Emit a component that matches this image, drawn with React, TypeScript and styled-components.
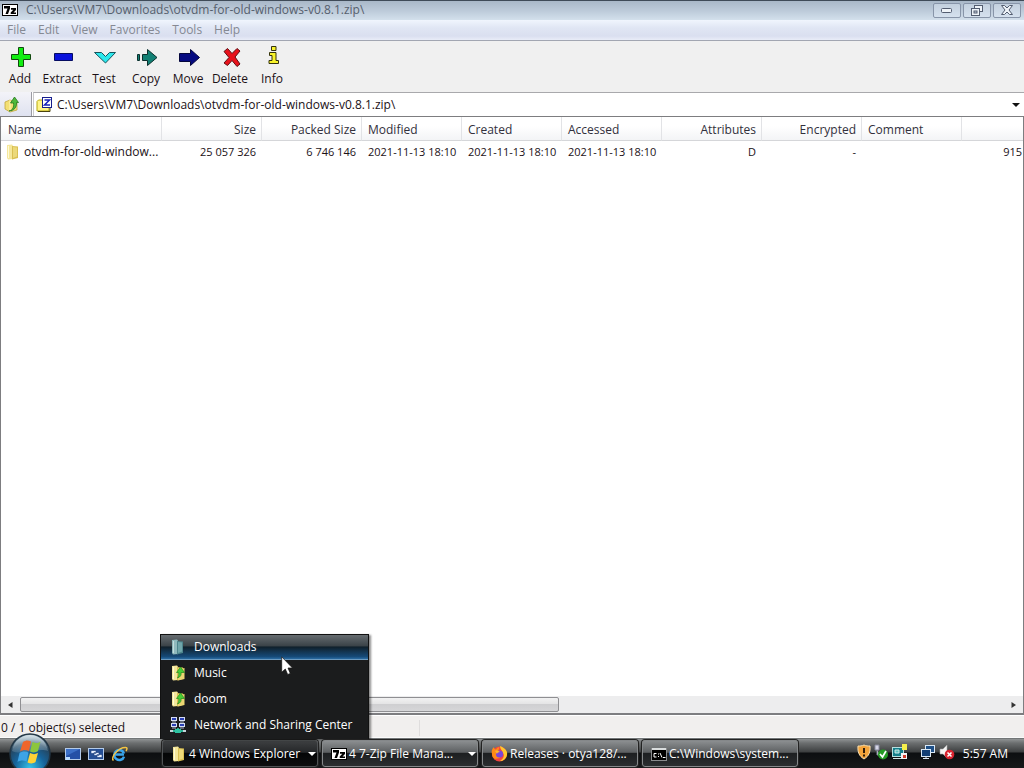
import React from 'react';
import styled, { createGlobalStyle, css } from 'styled-components';

const GlobalStyle = createGlobalStyle`
  *, *::before, *::after { box-sizing: border-box; }
  body {
    margin: 0;
    font-family: "Open Sans", "Noto Sans", sans-serif;
    font-size: 12px;
    line-height: 16px;
    color: #1b1116;
    background: #fff;
  }
  button, input { font: inherit; color: inherit; margin: 0; padding: 0; border: 0; background: none; }
  ul { list-style: none; margin: 0; padding: 0; }
  svg { display: block; flex: none; }
`;

const Desktop = styled.div`
  display: flex;
  flex-direction: column;
  height: 100vh;
  overflow: hidden;
`;

const Window = styled.main`
  flex: 1;
  min-height: 0;
  display: flex;
  flex-direction: column;
  background: #f0f0f0;
`;

const TitleBar = styled.header`
  height: 20px;
  display: flex;
  align-items: center;
  gap: 8px;
  padding: 0 3px 1px 2px;
  border-top: 1px solid #3f4b58;
  background: linear-gradient(#a9b8c8, #bccad9 50%, #d3e0ec);
  color: #56606d;
`;

const Title = styled.h1`
  flex: 1;
  margin: 0;
  font: inherit;
`;

const Caption = styled.div`
  display: flex;
  gap: 2px;
`;

const CaptionButton = styled.button`
  width: 28px;
  height: 15px;
  display: grid;
  place-items: center;
  border: 1px solid #8895a9;
  border-radius: 2px;
  background: linear-gradient(#c3d0de, #d5e1ee);
`;

const MenuBar = styled.nav`
  height: 21px;
  display: flex;
  align-items: center;
  gap: 12px;
  padding: 0 7px;
  color: #858993;
  background: linear-gradient(#f0f5fd, #e0e6f4 40%, #dadff0 80%, #e9edf8);
  border-bottom: 1px solid #a2a6b2;
`;

const Toolbar = styled.div`
  height: 51px;
  display: flex;
  margin-left: -1px;
  background: #f0f0f0;
`;

const Tool = styled.button`
  width: 42px;
  display: flex;
  flex-direction: column;
  align-items: center;
  gap: 2px;
  padding-top: 4px;
  white-space: nowrap;
`;

const AddressBar = styled.div`
  height: 24px;
  display: flex;
  background: #fff;
`;

const UpButton = styled.button`
  width: 32px;
  padding-left: 4px;
  background: linear-gradient(#f3f3f8, #dfe2f0);
  border-right: 1px solid #9c9ca4;
`;

const Combo = styled.label`
  flex: 1;
  display: flex;
  align-items: center;
  gap: 4px;
  padding: 0 4px 0 2px;
  margin-left: 1px;
  border-top: 1px solid #a9a9ac;
  border-left: 1px solid #c9c9cc;
`;

const PathInput = styled.input`
  flex: 1;
  min-width: 0;
  outline: 0;
`;

const ListPane = styled.section`
  flex: 1;
  min-height: 0;
  display: flex;
  flex-direction: column;
  background: #fff;
  border: 1px solid #7d7d80;
  border-bottom-width: 2px;
  overflow: hidden;
`;

const FileTable = styled.table`
  width: 100%;
  table-layout: fixed;
  border-collapse: separate;
  border-spacing: 0;
`;

const Column = styled.col<{ $width?: number }>`
  ${p => p.$width && css`width: ${p.$width}px;`}
`;

const HeadCell = styled.th<{ $right?: boolean }>`
  height: 24px;
  padding: 2px 5px 0 6px;
  font-weight: 400;
  text-align: ${p => (p.$right ? 'right' : 'left')};
  white-space: nowrap;
  color: #32303c;
  background: linear-gradient(#fff 40%, #f3f4f6);
  border-right: 1px solid #e2e3e6;
  border-bottom: 1px solid #d5d6d9;
  &:first-child { padding-left: 7px; }
  &:last-child { border-right: 0; }
`;

const Cell = styled.td<{ $right?: boolean }>`
  height: 21px;
  padding: 0 6px;
  font-size: 11px;
  text-align: ${p => (p.$right ? 'right' : 'left')};
  white-space: nowrap;
  &:last-child { padding-right: 1px; }
`;

const NameCell = styled(Cell)`
  font-size: 12px;
  padding: 0 4px;
`;

const FileName = styled.div`
  display: flex;
  align-items: center;
  gap: 3px;
`;

const Ellipsis = styled.span`
  overflow: hidden;
  text-overflow: ellipsis;
  white-space: nowrap;
`;

const EmptyArea = styled.div`
  flex: 1;
`;

const ScrollBar = styled.div`
  height: 17px;
  display: flex;
  background: #ededee;
`;

const ScrollArrow = styled.button`
  width: 19px;
  display: grid;
  place-items: center;
`;

const Track = styled.div`
  flex: 1;
`;

const Thumb = styled.div`
  width: 539px;
  height: 15px;
  margin-top: 1px;
  border: 1px solid #8f8f92;
  border-radius: 2px;
  background: linear-gradient(#f2f2f2, #e4e4e5 45%, #cfcfd1 50%, #d6d6d8);
`;

const StatusBar = styled.footer`
  height: 23px;
  display: flex;
  align-items: center;
  padding: 2px 0 0 1px;
  background: #f1efee;
  border-top: 1px solid #fff;
  border-bottom: 1px solid #fafafa;
`;

const StatusPart = styled.span<{ $width: number }>`
  width: ${p => p.$width}px;
  border-right: 1px solid #dfdddd;
`;

const Taskbar = styled.footer`
  position: relative;
  height: 30px;
  display: flex;
  align-items: center;
  padding: 1px 16px 0 9px;
  color: #fff;
  background: linear-gradient(#55585a, #909394 1px, #6c6f70 5px, #3c3e3f 14px, #0c0e10 15px, #17191a);
`;

const StartButton = styled.button`
  position: relative;
  width: 42px;
  height: 29px;
`;

const Orb = styled.svg`
  position: absolute;
  left: 0;
  bottom: -7px;
`;

const QuickLaunch = styled.div`
  width: 111px;
  display: flex;
  gap: 7px;
  padding-left: 14px;
`;

const Tasks = styled.div`
  flex: 1;
  min-width: 0;
  display: flex;
  gap: 4px;
`;

const TaskSlot = styled.div`
  position: relative;
  flex: 0 1 156px;
  min-width: 0;
`;

const TaskButton = styled.button<{ $active?: boolean }>`
  width: 100%;
  height: 27px;
  display: flex;
  align-items: center;
  gap: 2px;
  padding: 0 1px 0 8px;
  border: 1px solid #85888a;
  border-radius: 3px;
  color: #fff;
  text-align: left;
  background: linear-gradient(#8b8e90, #5d6062 45%, #1d1f21 50%, #2b2e30);
  box-shadow: 0 0 0 1px #222;
  ${p =>
    p.$active &&
    css`
      border-color: #4f5254;
      background: linear-gradient(#3d3f41, #252729 45%, #050607 50%, #0d0e0f);
    `}
`;

const TaskLabel = styled.span`
  flex: 1;
  white-space: nowrap;
`;

const GroupMenu = styled.ul`
  position: absolute;
  left: -2px;
  bottom: 28px;
  width: 209px;
  padding-bottom: 1px;
  background: #1b1c1d;
  border: 1px solid #111;
  border-bottom: 0;
  box-shadow: 2px 1px 2px rgba(0, 0, 0, 0.45);
`;

const GroupItem = styled.button<{ $hot?: boolean }>`
  width: 100%;
  height: 26px;
  display: flex;
  align-items: center;
  gap: 8px;
  padding: 0 9px;
  color: #fff;
  white-space: nowrap;
  ${p =>
    p.$hot &&
    css`
      height: 25px;
      background: linear-gradient(#666c70, #3b4348 45%, #10202b 50%, #164a78 90%, #2b6ca3);
      border-bottom: 1px solid #6d9bc0;
    `}
`;

const Pointer = styled.svg`
  position: absolute;
  left: 120px;
  top: 21px;
`;

const Tray = styled.div`
  display: flex;
  align-items: center;
  gap: 2px;
`;

const TrayIcons = styled.div`
  display: flex;
  gap: 2px;
  padding-bottom: 4px;
`;

const Clock = styled.time`
  margin-left: 6px;
  white-space: nowrap;
`;

const SevenZip = () => (
  <svg width="16" height="16" viewBox="0 0 16 16">
    <rect x="0" y="2" width="16" height="12" fill="#000" />
    <rect x="1" y="3" width="14" height="10" fill="#fff" />
    <path d="M2 4h6v2.500L6 12H3.500L5.500 6.500H2z" fill="#000" />
    <path d="M9 6h5v2l-2.500 2.500H14V12H8.700v-1.500L11.300 7.700H9z" fill="#000" />
  </svg>
);

const Folder = ({ teal = false, arrow = false }: { teal?: boolean; arrow?: boolean }) => (
  <svg width="16" height="16" viewBox="0 0 16 16">
    <path d="M2 1l5-.5 1 1V15l-5 .5L2 14z" fill={teal ? '#8fb9bd' : '#f5e79b'} />
    <path d="M7 2l6 .5V14l-6 1.500z" fill={teal ? '#4d858d' : '#d9bf52'} />
    <path d="M8 3l4 .5v9L8 14z" fill={teal ? '#70a6ab' : '#ecd979'} />
    <path d="M3.500 2v12" stroke={teal ? '#c4dcdd' : '#fffbd5'} />
    {arrow && (
      <>
        <path d="M8 4l6.500-1v11L8 15.500z" fill="#ecd572" />
        <path d="M7.500 13c3-1 4-3 3.500-5.500H14.500L10.500 2 6.500 7.500h2.200C9 10 8.500 11.500 7.500 13z" fill="#48cf35" stroke="#238a1c" strokeWidth=".7" />
      </>
    )}
  </svg>
);

const UpFolder = () => (
  <svg width="17" height="17" viewBox="0 0 17 17">
    <path d="M1 6l5-2 7 3v7l-7 2-5-3z" fill="#f3df75" stroke="#c2a73c" strokeWidth=".8" />
    <path d="M6 4v12" stroke="#fff6b8" />
    <path d="M5 15c4-1 5-4 4.500-8H6.500l4-6L14.500 6.500h-2C13 11 10 15 5 15z" fill="#4fb93a" stroke="#257a1d" strokeWidth=".8" />
  </svg>
);

const ZipFolder = () => (
  <svg width="17" height="16" viewBox="0 0 17 16">
    <path d="M1 4.500l1.500-1.500h4L8 4.500h5V14H1z" fill="#fff58a" stroke="#b8a90c" />
    <path d="M2 14.500h12V11" fill="none" stroke="#4c4410" />
    <rect x="6.500" y=".5" width="9" height="10" fill="#fff" stroke="#171e8c" />
    <path d="M8.500 3h5L8.500 8h5.500" fill="none" stroke="#1520b8" strokeWidth="1.500" />
  </svg>
);

const Network = () => (
  <svg width="16" height="16" viewBox="0 0 16 16">
    {[[1, 0], [9, 0], [1, 6], [9, 6]].map(([x, y]) => (
      <g key={`${x}-${y}`}>
        <rect x={x + 0.5} y={y + 0.5} width="5" height="3" fill="#2a3fb4" stroke="#d5dcf2" />
        <path d={`M${x + 1} ${y + 5}h4`} stroke="#a9b4d0" />
      </g>
    ))}
    <path d="M8 11v3M0 14h16" stroke="#2bb192" strokeWidth="2" />
    <rect x="5" y="12" width="6" height="4" fill="#2fc3a2" />
    <path d="M0 13h3v2H0zM13 13h3v2h-3z" fill="#c5d5da" />
  </svg>
);

const Firefox = () => (
  <svg width="17" height="17" viewBox="0 0 17 17">
    <circle cx="8.500" cy="9" r="7.500" fill="#f4433f" />
    <path d="M1 9C0 5 2 3 3 2c0 1.500.8 2.300 2 2.500C6 3 7 2 8.500 2L7 7l2 6-5 1C2 13 1 11 1 9z" fill="#ff8a16" />
    <path d="M9 1c5 2 8 5 7 9-1 4-4 6-7 6 3-2 5-5 3-8C11 5 9 4 9 1z" fill="#ffc62e" />
    <circle cx="8.500" cy="9" r="3.600" fill="#7b46d8" />
    <path d="M4 6c2-1 4 0 5 1-2 0-3 1-3 2z" fill="#ffb52a" />
  </svg>
);

const CommandPrompt = () => (
  <svg width="16" height="16" viewBox="0 0 16 16">
    <rect x=".5" y="2.500" width="15" height="12" fill="#000" stroke="#8a8c8e" />
    <rect x="1" y="2" width="14" height="2" fill="#d9dcdd" />
    <path d="M5.500 7.500H3v3.500h2.500M7 8h1M7 10.500h1M9 7l2 4.500M12 11.500h2.500" fill="none" stroke="#fff" />
  </svg>
);

const WindowsOrb = () => (
  <Orb as="svg" width="42" height="42" viewBox="0 0 42 42" aria-hidden="true">
    <defs>
      <radialGradient id="glass" cx=".5" cy=".85" r=".85">
        <stop offset="0" stopColor="#35c3ea" />
        <stop offset=".45" stopColor="#17639a" />
        <stop offset=".75" stopColor="#24455f" />
        <stop offset="1" stopColor="#9eb3bf" />
      </radialGradient>
      <linearGradient id="gloss" x1="0" y1="0" x2="0" y2="1">
        <stop offset="0" stopColor="#e7f0f4" stopOpacity=".85" />
        <stop offset="1" stopColor="#a5c0d0" stopOpacity=".2" />
      </linearGradient>
    </defs>
    <circle cx="21" cy="21" r="20" fill="url(#glass)" stroke="#223645" strokeWidth="1.500" />
    <path d="M3 18C5 7 13 2 21 2s16 5 18 16c-10-4-26 5-36 0z" fill="url(#gloss)" />
    <path d="M14 9c3-2 5-2 8-.5l-2 9.500c-3-1.500-6-1.500-9 .5z" fill="#f0652a" />
    <path d="M23.500 9c3 1.500 5.500 1.500 8-.5l-2.500 9.500c-3 2-5 1.500-8 .5z" fill="#8cc63c" />
    <path d="M10.500 20c3-2 6-2 9-.5l-2 9c-3-1.500-6-1.500-9 .5z" fill="#3da3e6" />
    <path d="M21 20c3 1.500 5 1.500 8 0l-2.500 9c-3 2-5 1.500-8 .5z" fill="#ffd235" />
  </Orb>
);

const Caret = ({ color = '#111' }: { color?: string }) => (
  <svg width="8" height="6" viewBox="0 0 8 6">
    <path d="M0 1h8L4 5z" fill={color} />
  </svg>
);

const tools: { label: string; art: React.ReactNode }[] = [
  { label: 'Add', art: <path d="M10.500 2.500h5v7h7v5h-7v7h-5v-7h-7v-5h7z" fill="#12ee12" stroke="#12480f" /> },
  { label: 'Extract', art: <path d="M4.500 8.500h18v7h-18z" fill="#0a12dc" stroke="#060d62" /> },
  { label: 'Test', art: <path d="M2.500 7.500h7l4 4 4-4h6L13.500 18z" fill="#2de8ec" stroke="#16545d" /> },
  { label: 'Copy', art: <path d="M3.500 9.500h2v6h-2zM8.500 9.500h5v-5l9.500 8-9.500 8v-5h-5z" fill="#128074" stroke="#0a2f2c" /> },
  { label: 'Move', art: <path d="M3.500 8.500h11v-4l9 8-9 8v-4h-11z" fill="#050a80" stroke="#04063c" /> },
  { label: 'Delete', art: <path d="M6 6.500l3.500-3 4.500 5 5-5 3 2.500-5 6 5 7-3 2.500-5-6-4.500 5L6 18l5-5.500z" fill="#e8121b" stroke="#5d1014" /> },
  { label: 'Info', art: <path d="M11.500 1.500h4.500v4h-4.500zM9.500 7.500h6.500v8h2.500v3h-9.500v-3h3v-5h-2.500z" fill="#f8f32b" stroke="#35330c" /> },
];

const columns: { name: string; width?: number; right?: boolean }[] = [
  { name: 'Name', width: 161 },
  { name: 'Size', width: 100, right: true },
  { name: 'Packed Size', width: 100, right: true },
  { name: 'Modified', width: 100 },
  { name: 'Created', width: 100 },
  { name: 'Accessed', width: 100 },
  { name: 'Attributes', width: 100, right: true },
  { name: 'Encrypted', width: 100, right: true },
  { name: 'Comment', width: 100 },
  { name: '', right: true },
];

const rowValues = ['25 057 326', '6 746 146', '2021-11-13 18:10', '2021-11-13 18:10', '2021-11-13 18:10', 'D', '-', '', '915'];

const archivePath = 'C:\\Users\\VM7\\Downloads\\otvdm-for-old-windows-v0.8.1.zip\\';

const groupItems = [
  { label: 'Downloads', icon: <Folder teal />, hot: true },
  { label: 'Music', icon: <Folder arrow /> },
  { label: 'doom', icon: <Folder arrow /> },
  { label: 'Network and Sharing Center', icon: <Network /> },
];

export default function App() {
  return (
    <Desktop>
      <GlobalStyle />
      <Window>
        <TitleBar>
          <SevenZip />
          <Title>{archivePath}</Title>
          <Caption>
            <CaptionButton aria-label="Minimize">
              <svg width="12" height="6" viewBox="0 0 12 6"><rect x=".5" y="1.500" width="10" height="4" rx="1" fill="#eef3f8" stroke="#535d70" /></svg>
            </CaptionButton>
            <CaptionButton aria-label="Restore">
              <svg width="12" height="11" viewBox="0 0 12 11">
                <rect x="3.500" y=".5" width="8" height="6" fill="#eef3f8" stroke="#535d70" />
                <rect x=".5" y="3.500" width="8" height="7" fill="#eef3f8" stroke="#535d70" />
                <rect x="3" y="6" width="3" height="2" fill="#cbd7e4" stroke="#535d70" />
              </svg>
            </CaptionButton>
            <CaptionButton aria-label="Close">
              <svg width="12" height="10" viewBox="0 0 12 10">
                <path d="M.5.5h3L6 3 8.500.5h3L8 5l3.500 4.500h-3L6 7 3.500 9.500h-3L4 5z" fill="#eef3f8" stroke="#535d70" />
              </svg>
            </CaptionButton>
          </Caption>
        </TitleBar>
        <MenuBar>
          {['File', 'Edit', 'View', 'Favorites', 'Tools', 'Help'].map(m => (
            <button key={m}>{m}</button>
          ))}
        </MenuBar>
        <Toolbar>
          {tools.map(t => (
            <Tool key={t.label}>
              <svg width="24" height="24" viewBox="0 0 24 24">{t.art}</svg>
              {t.label}
            </Tool>
          ))}
        </Toolbar>
        <AddressBar>
          <UpButton aria-label="Up one level"><UpFolder /></UpButton>
          <Combo>
            <ZipFolder />
            <PathInput aria-label="Path" defaultValue={archivePath} spellCheck={false} />
            <button aria-label="Show recent paths"><Caret /></button>
          </Combo>
        </AddressBar>
        <ListPane>
          <FileTable>
            <colgroup>
              {columns.map(c => <Column key={c.name} $width={c.width} />)}
            </colgroup>
            <thead>
              <tr>
                {columns.map(c => <HeadCell key={c.name} $right={c.right}>{c.name}</HeadCell>)}
              </tr>
            </thead>
            <tbody>
              <tr>
                <NameCell>
                  <FileName><Folder /><span>otvdm-for-old-window...</span></FileName>
                </NameCell>
                {rowValues.map((v, i) => <Cell key={columns[i + 1].name} $right={columns[i + 1].right}>{v}</Cell>)}
              </tr>
            </tbody>
          </FileTable>
          <EmptyArea />
          <ScrollBar>
            <ScrollArrow aria-label="Scroll left">
              <svg width="5" height="8" viewBox="0 0 5 8"><path d="M4.500 1v6L0 4z" fill="#333" /></svg>
            </ScrollArrow>
            <Track><Thumb /></Track>
            <ScrollArrow aria-label="Scroll right">
              <svg width="5" height="8" viewBox="0 0 5 8"><path d="M.5 1v6L5 4z" fill="#333" /></svg>
            </ScrollArrow>
          </ScrollBar>
        </ListPane>
        <StatusBar>
          <StatusPart $width={419}>0 / 1 object(s) selected</StatusPart>
        </StatusBar>
      </Window>
      <Taskbar>
        <StartButton aria-label="Start"><WindowsOrb /></StartButton>
        <QuickLaunch>
          <button aria-label="Show desktop">
            <svg width="16" height="16" viewBox="0 0 16 16">
              <rect x=".5" y="2.500" width="15" height="11" fill="#3b6fc6" stroke="#b3cbea" />
              <path d="M1 10L15 3v10H1z" fill="#2450a6" />
              <rect x="1" y="11" width="4" height="3" fill="#b9dcff" />
            </svg>
          </button>
          <button aria-label="Switch between windows">
            <svg width="16" height="16" viewBox="0 0 16 16">
              <rect x=".5" y="2.500" width="15" height="11" fill="#254f95" stroke="#b3cbea" />
              <path d="M3 4.500h5v3H3zM6 6.500h5v3H6zM9 8.500h5v3H9z" fill="#e9f2ff" stroke="#173a78" strokeWidth=".6" />
            </svg>
          </button>
          <button aria-label="Internet Explorer">
            <svg width="17" height="16" viewBox="0 0 17 16">
              <path d="M13 10.500A5 5 0 1 1 13 7.500M4.500 8.500H13" fill="none" stroke="#3aa5ec" strokeWidth="2.500" />
              <path d="M2.500 14.500C-1 12 7 1 15 1.500c1.500 0 1 2 0 3.500" fill="none" stroke="#f5c542" strokeWidth="1.500" />
            </svg>
          </button>
        </QuickLaunch>
        <Tasks>
          <TaskSlot>
            <TaskButton $active>
              <Folder /><TaskLabel>4 Windows Explorer</TaskLabel><Caret color="#fff" />
            </TaskButton>
            <GroupMenu>
              {groupItems.map(g => (
                <li key={g.label}><GroupItem $hot={g.hot}>{g.icon}{g.label}</GroupItem></li>
              ))}
              <Pointer as="svg" width="12" height="20" viewBox="0 0 12 20">
                <path d="M.7.8v15.500l3.600-3.300 2.400 5.500 2.600-1.100L7 12h4.500z" fill="#fff" stroke="#111" strokeWidth=".7" />
              </Pointer>
            </GroupMenu>
          </TaskSlot>
          <TaskSlot>
            <TaskButton><SevenZip /><TaskLabel>4 7-Zip File Mana...</TaskLabel><Caret color="#fff" /></TaskButton>
          </TaskSlot>
          <TaskSlot>
            <TaskButton><Firefox /><TaskLabel>Releases · otya128/...</TaskLabel></TaskButton>
          </TaskSlot>
          <TaskSlot>
            <TaskButton><CommandPrompt /><TaskLabel>C:\Windows\system...</TaskLabel></TaskButton>
          </TaskSlot>
        </Tasks>
        <Tray>
          <TrayIcons>
            <svg width="14" height="16" viewBox="0 0 14 16">
              <path d="M7 1c2 1 4 1 6 1 .500 6-1 10-6 13C2 12 .5 8 1 2c2 0 4 0 6-1z" fill="#f3a43b" stroke="#f8dfb0" />
              <path d="M7 4v5M7 10.500v2" stroke="#2e1c08" strokeWidth="2" />
            </svg>
            <svg width="17" height="16" viewBox="0 0 17 16">
              <path d="M2 1h4v5H2zM4 6v5h3" fill="#d6d6e6" stroke="#84879a" />
              <circle cx="10" cy="10.500" r="5" fill="#259b25" />
              <path d="M7 10l2.500 3L13 7" fill="none" stroke="#fff" strokeWidth="1.700" />
            </svg>
            <svg width="16" height="16" viewBox="0 0 16 16">
              <rect x=".5" y="3.500" width="11" height="9" fill="#157f8a" stroke="#b6dfe0" />
              <path d="M1 14.500h11M3 6h4v3H3z" fill="#56c2bd" stroke="#cfe6e6" />
              <rect x="10" y="0" width="5" height="6" fill="#f4ee4a" />
              <rect x="9" y="9" width="6" height="6" fill="#f4f4f4" />
              <rect x="11" y="11" width="3" height="3" fill="#d23d2c" />
            </svg>
            <svg width="26" height="16" viewBox="0 0 26 16">
              <rect x="15.500" y="1.500" width="9" height="7" fill="#1d4f87" stroke="#d9e8f5" />
              <path d="M20 9v2" stroke="#d9e8f5" />
              <rect x="11.500" y="5.500" width="9" height="7" fill="#123e74" stroke="#d9e8f5" />
              <path d="M16 13v1.500M13 14.500h6" stroke="#d9e8f5" />
            </svg>
            <svg width="17" height="16" viewBox="0 0 17 16">
              <path d="M2 5h3l4-4v13l-4-4H2z" fill="#f4f4f4" stroke="#a4a4a4" strokeWidth=".6" />
              <circle cx="11.500" cy="10.500" r="4.800" fill="#d8232f" />
              <path d="M9.500 8.500l4 4M13.500 8.500l-4 4" stroke="#fff" strokeWidth="1.500" />
            </svg>
          </TrayIcons>
          <Clock>5:57 AM</Clock>
        </Tray>
      </Taskbar>
    </Desktop>
  );
}
